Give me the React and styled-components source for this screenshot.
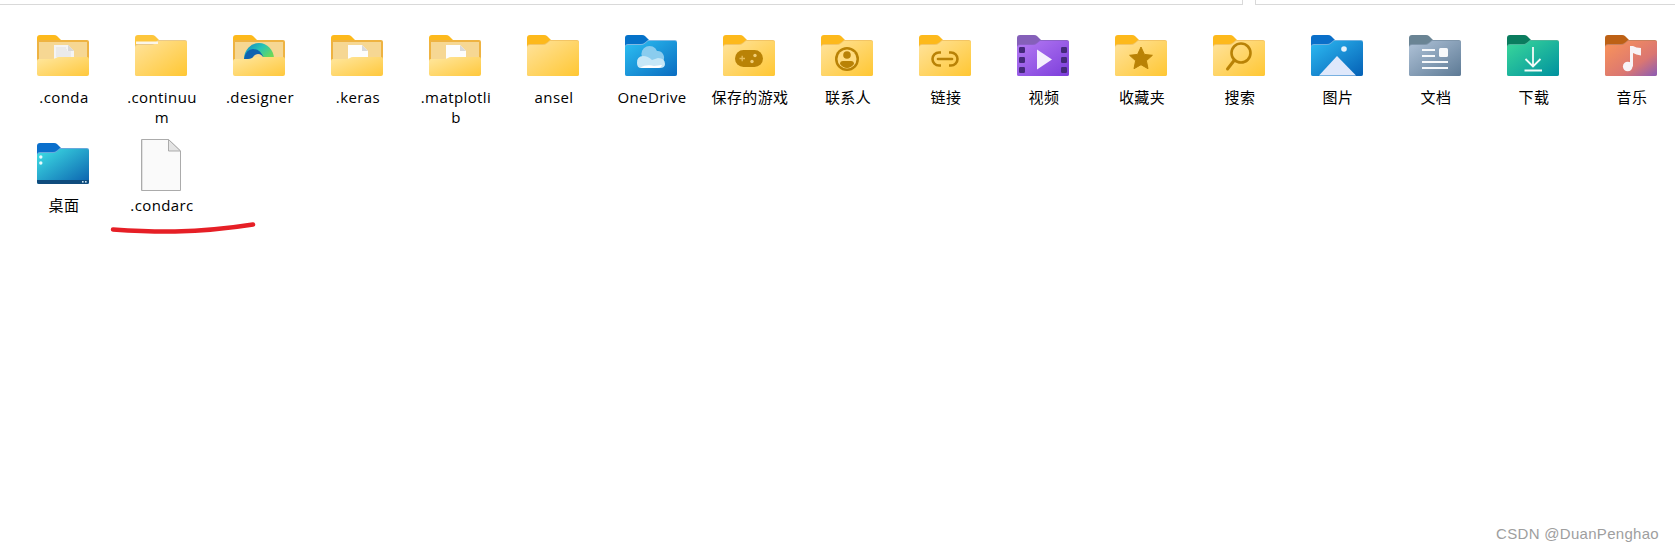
import * as React from "react";
import styled, { createGlobalStyle } from "styled-components";

const GlobalStyle = createGlobalStyle`
  html, body {
    margin: 0;
    padding: 0;
    background: #fff;
  }
`;

const Page = styled.div`
  position: relative;
  width: 1675px;
  height: 552px;
  overflow: hidden;
  background: #fff;
  font-family: "Open Sans", "Noto Sans CJK SC", sans-serif;
`;

// the two boxes cut off at the top of the screenshot
const TopBar = styled.div`
  display: flex;
  justify-content: space-between;
  height: 5px;
`;

const TopBox = styled.div`
  box-sizing: border-box;
  width: ${(props) => props.$width}px;
  border-bottom: 1px solid #d9d9d9;
  border-${(props) => props.$side}: 1px solid #d9d9d9;
`;

const FileGrid = styled.div`
  display: grid;
  grid-template-columns: repeat(17, 98px);
  grid-auto-rows: 108px;
  padding: 26px 0 0 14px;
`;

const Tile = styled.div`
  display: flex;
  flex-direction: column;
  align-items: center;
`;

const IconSvg = styled.svg`
  display: block;
  flex: none;
  width: 64px;
  height: 56px;
`;

const Label = styled.div`
  width: 78px;
  margin-left: 2px;
  font-size: 15px;
  letter-spacing: 0.4px;
  line-height: 20px;
  color: #000;
  text-align: center;
  word-break: break-all;
`;

const Watermark = styled.div`
  position: absolute;
  right: 16px;
  bottom: 8px;
  font-family: "Liberation Sans", sans-serif;
  font-size: 15px;
  letter-spacing: 0.3px;
  line-height: 20px;
  color: #9e9e9e;
`;

const Scribble = styled.svg`
  position: absolute;
  left: 105px;
  top: 216px;
  width: 160px;
  height: 24px;
`;

const Folder = ({ tab, edge, from, to, children, mid }) => {
  const id = React.useId();
  return (
    <IconSvg viewBox="0 0 64 56">
      <defs>
        <linearGradient id={id} x1="0" y1="0" x2="1" y2="1">
          <stop offset="0" stopColor={from} />
          {mid && <stop offset="0.65" stopColor={mid} />}
          <stop offset="1" stopColor={to} />
        </linearGradient>
      </defs>
      <g transform="translate(6 4)">
        <path
          d="M0 3 Q0 0 3 0 H17 Q19 0 20 1 L24 5 V12 H0 Z"
          fill={tab}
        />
        <path
          d="M0 12 Q0 9 3 9 H16 Q18 9 20 7.5 L23 5 H50 Q52 5 52 7 V39 Q52 41 50 41 H2 Q0 41 0 39 Z"
          fill={edge}
        />
        <path
          d="M0 13 Q0 10 3 10 H16 Q18 10 20 8.5 L23 6 H50 Q52 6 52 8 V39 Q52 41 50 41 H2 Q0 41 0 39 Z"
          fill={`url(#${id})`}
        />
        {children}
      </g>
    </IconSvg>
  );
};

const Yellow = (props) => (
  <Folder tab="#fdb91c" edge="#f3c565" from="#ffe39c" to="#ffc733" {...props} />
);

// folder with something sticking out of its open front
const OpenFolder = ({ children }) => {
  const id = React.useId();
  return (
    <IconSvg viewBox="0 0 64 56">
      <defs>
        <linearGradient id={id} x1="0" y1="0" x2="1" y2="1">
          <stop offset="0" stopColor="#ffe79f" />
          <stop offset="1" stopColor="#ffc83c" />
        </linearGradient>
      </defs>
      <g transform="translate(6 4)">
        <path d="M0 3 Q0 0 3 0 H17 Q19 0 20 1 L24 5 V12 H0 Z" fill="#fdb91c" />
        <path d="M0 7 Q0 5 2 5 H50 Q52 5 52 7 V26 H0 Z" fill="#eeb342" />
        <rect x="2" y="7" width="48" height="19" fill="#f6d793" />
        {children}
        <path
          d="M0 26 Q0 24 2 24 H15 Q17 24 19 23 Q20 22 22 22 H50 Q52 22 52 24 V39 Q52 41 50 41 H2 Q0 41 0 39 Z"
          fill={`url(#${id})`}
        />
      </g>
    </IconSvg>
  );
};

const PaperSheet = ({ lined }) => (
  <>
    <path d="M17 10 H31 L37 16 V26 H17 Z" fill={lined ? "#f4f4f4" : "#fdfdfd"} />
    <path d="M31 10 L37 16 H31 Z" fill="#d9d9d9" />
    {lined && (
      <path
        d="M19 13 H29 M19 15 H30 M19 17 H34 M19 19 H34 M19 21 H34"
        stroke="#dcdcdc"
        strokeWidth="0.8"
      />
    )}
  </>
);

const EdgeLogo = () => {
  const id = React.useId();
  return (
    <>
      <defs>
        <linearGradient id={id} x1="0" y1="0" x2="1" y2="0.6">
          <stop offset="0" stopColor="#0f7fc9" />
          <stop offset="0.55" stopColor="#27c5b5" />
          <stop offset="1" stopColor="#6bd85a" />
        </linearGradient>
      </defs>
      <path d="M11 24 A15 16 0 0 1 41 24 Z" fill={`url(#${id})`} />
      <path d="M11 24 Q13 14 20 14 Q28 14 31 24 Z" fill="#0f62b0" />
      <path d="M19 24 Q21 19 25 19 Q29 19 31 24 Z" fill="#f6d793" />
    </>
  );
};

const GOLD = "#b98206";

const icons = {
  conda: () => (
    <OpenFolder>
      <PaperSheet lined />
    </OpenFolder>
  ),
  continuum: () => (
    <Folder tab="#fdc63c" edge="#e9c98a" from="#ffe39c" to="#ffc733">
      <rect x="1" y="6.5" width="22" height="2.5" fill="#fbf6ea" />
    </Folder>
  ),
  designer: () => (
    <OpenFolder>
      <EdgeLogo />
    </OpenFolder>
  ),
  sheet: () => (
    <OpenFolder>
      <PaperSheet />
    </OpenFolder>
  ),
  plain: () => <Yellow />,
  onedrive: () => (
    <Folder tab="#0572c9" edge="#7fb9e4" from="#2cc0f3" to="#0a6cc0">
      <path
        d="M17 22 A8 8 0 0 1 32 16 A6.5 6.5 0 0 1 38 26 H15 Z"
        fill="#8accee"
      />
      <path
        d="M12 28 A6 6 0 0 1 18 21 Q23 21 27 25 L33 23 Q40 23 40 29 Q40 33 35 33 H16 Q12 33 12 28 Z"
        fill="#c6e7f7"
      />
      <path d="M15 32.5 Q22 29 29 31 L37 30 Q36 33 33 33 H18 Z" fill="#fff" />
    </Folder>
  ),
  games: () => (
    <Yellow>
      <rect x="12" y="15" width="28" height="17" rx="8.5" fill={GOLD} />
      <path d="M16.5 23.5 H22 M19.2 20.8 V26.2" stroke="#e7bd5a" strokeWidth="1.3" />
      <circle cx="32" cy="20.5" r="1.7" fill="#f0cd77" />
      <circle cx="29" cy="26.5" r="1.7" fill="#f0cd77" />
    </Yellow>
  ),
  contacts: () => (
    <Yellow>
      <circle cx="26" cy="24" r="12" fill={GOLD} />
      <circle cx="26" cy="24" r="9.5" fill="#ffdb80" />
      <circle cx="26" cy="20" r="3.8" fill={GOLD} />
      <path d="M19 29 Q19 26 22 26 H30 Q33 26 33 29 Q30 33 26 33 Q22 33 19 29 Z" fill={GOLD} />
    </Yellow>
  ),
  links: () => (
    <Yellow>
      <path
        d="M22 17.5 H20 A6.5 6.5 0 0 0 20 30.5 H22 M30 17.5 H32 A6.5 6.5 0 0 1 32 30.5 H30"
        fill="none"
        stroke={GOLD}
        strokeWidth="2.6"
      />
      <path d="M19 24 H33" stroke={GOLD} strokeWidth="2.6" strokeLinecap="round" />
    </Yellow>
  ),
  video: () => (
    <Folder tab="#8560b9" edge="#8c62c8" from="#b57bf3" to="#7c3ddb">
      {[12, 22, 32].map((y) => (
        <React.Fragment key={y}>
          <rect x="2" y={y} width="6" height="6" rx="1.2" fill="#44297b" />
          <rect x="44" y={y} width="6" height="6" rx="1.2" fill="#44297b" />
        </React.Fragment>
      ))}
      <path d="M20 14.5 L35 24.5 L20 34.5 Z" fill="#f5effd" />
    </Folder>
  ),
  favorites: () => (
    <Yellow>
      <path
        d="M26 12 L29.4 19.4 L37.4 20.3 L31.4 25.7 L33 33.7 L26 29.7 L19 33.7 L20.6 25.7 L14.6 20.3 L22.6 19.4 Z"
        fill={GOLD}
        stroke={GOLD}
        strokeLinejoin="round"
      />
    </Yellow>
  ),
  search: () => (
    <Yellow>
      <circle cx="28" cy="18" r="9.5" fill="none" stroke={GOLD} strokeWidth="2.6" />
      <path d="M21.5 25 L14.5 34" stroke={GOLD} strokeWidth="3" strokeLinecap="round" />
    </Yellow>
  ),
  pictures: () => {
    return (
      <Folder tab="#0a6fc9" edge="#6fb1e0" from="#2dbaf2" to="#0560b5">
        <circle cx="33" cy="14" r="2.8" fill="#e6f1fb" />
        <path d="M26 21 L45 40.5 H8 Z" fill="#dfe8fb" />
      </Folder>
    );
  },
  documents: () => (
    <Folder tab="#6a8494" edge="#7f96ab" from="#b0c3d8" to="#5d7a95">
      <path
        d="M13 15 H26 M13 21 H26 M13 27 H39 M13 33 H39"
        stroke="#f7f9fb"
        strokeWidth="2"
      />
      <rect x="30" y="13" width="9" height="9" rx="1.5" fill="#f7f9fb" />
    </Folder>
  ),
  downloads: () => (
    <Folder tab="#0a7c5e" edge="#4bb59a" from="#3ad89a" to="#00919f">
      <path
        d="M26 12 V31 M18.5 24 L26 31.5 L33.5 24 M17.5 35.5 H35"
        fill="none"
        stroke="#f4fbf8"
        strokeWidth="1.8"
      />
    </Folder>
  ),
  music: () => (
    <Folder tab="#bd6115" edge="#c9815f" from="#fb9558" to="#8a5cb6" mid="#da7672">
      <circle cx="22.7" cy="31.5" r="4.8" fill="#f8f3f6" />
      <path d="M25 31.5 V11 H28 Q31 13 36 13 V20.5 Q31 19.5 28 18 V31.5 Z" fill="#f8f3f6" />
    </Folder>
  ),
  desktop: () => (
    <Folder tab="#0a6fcc" edge="#66a9dc" from="#3fe2e6" to="#0a5fae">
      <path d="M0 37 H52 V39 Q52 41 50 41 H2 Q0 41 0 39 Z" fill="#0f4c7d" />
      <circle cx="3.8" cy="14" r="1.7" fill="#e9fbfd" />
      <circle cx="3.8" cy="20" r="1.7" fill="#e9fbfd" />
      <rect x="45" y="38" width="1.6" height="1.6" fill="#cfe7f4" />
      <rect x="48" y="38" width="1.6" height="1.6" fill="#cfe7f4" />
    </Folder>
  ),
  file: () => (
    <IconSvg viewBox="0 0 64 56">
      <path
        d="M12.5 0.5 H39.5 L51.5 12 V51.5 H12.5 Z"
        fill="#fafafa"
        stroke="#ababab"
      />
      <path d="M13.5 1 V51" stroke="#e2e2e2" />
      <path d="M39.5 0.5 V12 H51.5 Z" fill="#e4e4e4" stroke="#ababab" />
    </IconSvg>
  ),
};

const items = [
  [".conda", "conda"],
  [".continuum", "continuum"],
  [".designer", "designer"],
  [".keras", "sheet"],
  [".matplotlib", "sheet"],
  ["ansel", "plain"],
  ["OneDrive", "onedrive"],
  ["保存的游戏", "games"],
  ["联系人", "contacts"],
  ["链接", "links"],
  ["视频", "video"],
  ["收藏夹", "favorites"],
  ["搜索", "search"],
  ["图片", "pictures"],
  ["文档", "documents"],
  ["下载", "downloads"],
  ["音乐", "music"],
  ["桌面", "desktop"],
  [".condarc", "file"],
];

export default function App() {
  return (
    <Page>
      <GlobalStyle />
      <TopBar>
        <TopBox $width={1243} $side="right" />
        <TopBox $width={420} $side="left" />
      </TopBar>
      <FileGrid>
        {items.map(([name, icon]) => {
          const Icon = icons[icon];
          return (
            <Tile key={name}>
              <Icon />
              <Label>{name}</Label>
            </Tile>
          );
        })}
      </FileGrid>
      {/* red marker stroke under .condarc */}
      <Scribble viewBox="0 0 160 24">
        <path
          d="M8 13.5 Q45 16 70 15.5 Q110 14.5 148 8.5"
          fill="none"
          stroke="#e61f26"
          strokeWidth="4.5"
          strokeLinecap="round"
        />
      </Scribble>
      <Watermark>CSDN @DuanPenghao</Watermark>
    </Page>
  );
}
